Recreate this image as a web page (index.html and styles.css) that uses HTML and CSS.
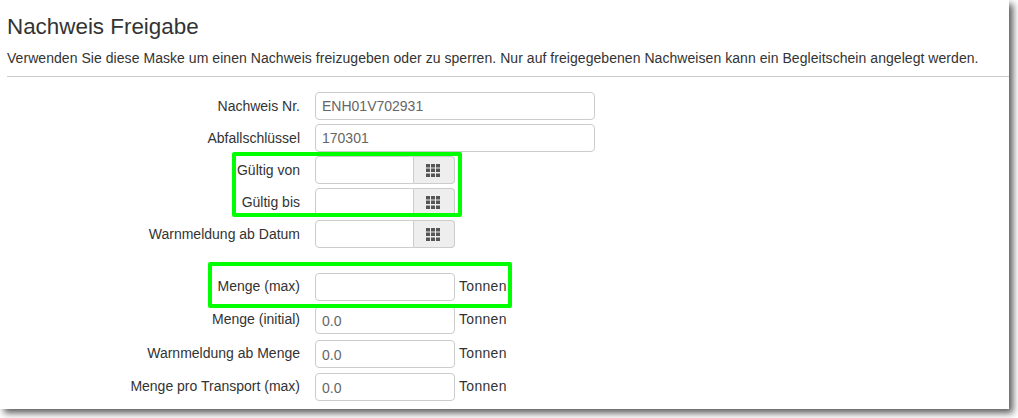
FILE: index.html
```html
<!DOCTYPE html>
<html lang="de">
<head>
<meta charset="utf-8">
<title>Nachweis Freigabe</title>
<link rel="stylesheet" href="styles.css">
</head>
<body>
<main class="panel">
  <h1 class="title">Nachweis Freigabe</h1>
  <p class="intro">Verwenden Sie diese Maske um einen Nachweis freizugeben oder zu sperren. Nur auf freigegebenen Nachweisen kann ein Begleitschein angelegt werden.</p>
  <hr class="rule">
  <form class="form">
    <div class="row"><label class="label">Nachweis Nr.</label><input class="input input-wide" value="ENH01V702931" readonly></div>
    <div class="row"><label class="label">Abfallschlüssel</label><input class="input input-wide" value="170301" readonly></div>
    <div class="row"><label class="label">Gültig von</label><div class="date"><input class="input input-date"><span class="addon"><svg class="grid-icon" viewBox="0 0 14 13"><path d="M0 0h4v3.4H0zM5 0h4v3.4H5zM10 0h4v3.4h-4zM0 4.6h4V8H0zM5 4.6h4V8H5zM10 4.6h4V8h-4zM0 9.4h4V13H0zM5 9.4h4V13H5zM10 9.4h4V13h-4z"/></svg></span></div></div>
    <div class="row"><label class="label">Gültig bis</label><div class="date"><input class="input input-date"><span class="addon"><svg class="grid-icon" viewBox="0 0 14 13"><path d="M0 0h4v3.4H0zM5 0h4v3.4H5zM10 0h4v3.4h-4zM0 4.6h4V8H0zM5 4.6h4V8H5zM10 4.6h4V8h-4zM0 9.4h4V13H0zM5 9.4h4V13H5zM10 9.4h4V13h-4z"/></svg></span></div></div>
    <div class="row"><label class="label">Warnmeldung ab Datum</label><div class="date"><input class="input input-date"><span class="addon"><svg class="grid-icon" viewBox="0 0 14 13"><path d="M0 0h4v3.4H0zM5 0h4v3.4H5zM10 0h4v3.4h-4zM0 4.6h4V8H0zM5 4.6h4V8H5zM10 4.6h4V8h-4zM0 9.4h4V13H0zM5 9.4h4V13H5zM10 9.4h4V13h-4z"/></svg></span></div></div>
    <div class="row row-sep row-num"><label class="label">Menge (max)</label><input class="input input-num"><span class="unit">Tonnen</span></div>
    <div class="row row-num row-tall"><label class="label">Menge (initial)</label><input class="input input-num" value="0.0" readonly><span class="unit">Tonnen</span></div>
    <div class="row row-num"><label class="label">Warnmeldung ab Menge</label><input class="input input-num" value="0.0" readonly><span class="unit">Tonnen</span></div>
    <div class="row row-num"><label class="label">Menge pro Transport (max)</label><input class="input input-num" value="0.0" readonly><span class="unit">Tonnen</span></div>
  </form>
  <div class="mark mark-dates"></div>
  <div class="mark mark-menge"></div>
</main>
</body>
</html>
```
FILE: styles.css
```css
* { box-sizing: border-box; }
html, body { margin: 0; padding: 0; background: #fff; }
body { width: 1018px; height: 418px; overflow: hidden; font-family: "Liberation Sans", Arial, sans-serif; color: #333; }
.panel {
  position: relative;
  width: 1009px;
  height: 409px;
  background: #fff;
  padding: 15px 0 0 7px;
  box-shadow: 4px 4px 7px 0 rgba(0,0,0,.65);
}
.title { margin: 0; font-size: 22.4px; line-height: 24px; font-weight: 400; }
.intro { margin: 10px 0 0; font-size: 14px; letter-spacing: .05px; line-height: 18px; white-space: nowrap; }
.rule { margin: 9px 0 0; height: 1px; border: 0; background: #ccc; width: 1002px; }
.form { margin-top: 15px; display: flex; flex-direction: column; }
.row { display: flex; align-items: center; height: 28px; margin-bottom: 4px; font-size: 14px; }
.row-sep { margin-top: 21px; }
.row-num { margin-bottom: 5px; }
.row-tall { margin-bottom: 6px; }
.row-num .label { margin-top: -2px; }
.row-num .input { padding-top: 2px; }
.label { width: 293px; text-align: right; margin-right: 15px; flex: none; font-size: 14px; }
.input {
  height: 28px;
  border: 1px solid #ccc;
  border-radius: 4px;
  padding: 0 6px;
  font: 14px "Liberation Sans", Arial, sans-serif;
  color: #666;
  background: #fff;
  outline: 0;
}
.input-wide { width: 280px; }
.input-num { width: 140px; }
.input-date { width: 99px; border-radius: 4px 0 0 4px; }
.date { display: flex; width: 140px; }
.addon {
  flex: 1;
  height: 28px;
  display: flex;
  align-items: center;
  justify-content: center;
  padding-right: 2px;
  background: #eee;
  border: 1px solid #ccc;
  border-left: 0;
  border-radius: 0 4px 4px 0;
}
.grid-icon { width: 14px; height: 13px; fill: #555; }
.unit { margin-left: 4px; margin-top: -2px; letter-spacing: .3px; }
.mark { position: absolute; border: 4px solid #0f0; border-radius: 2px; }
.mark-dates { left: 232px; top: 152px; width: 230px; height: 65px; }
.mark-menge { left: 208px; top: 262px; width: 304px; height: 46px; }
```
